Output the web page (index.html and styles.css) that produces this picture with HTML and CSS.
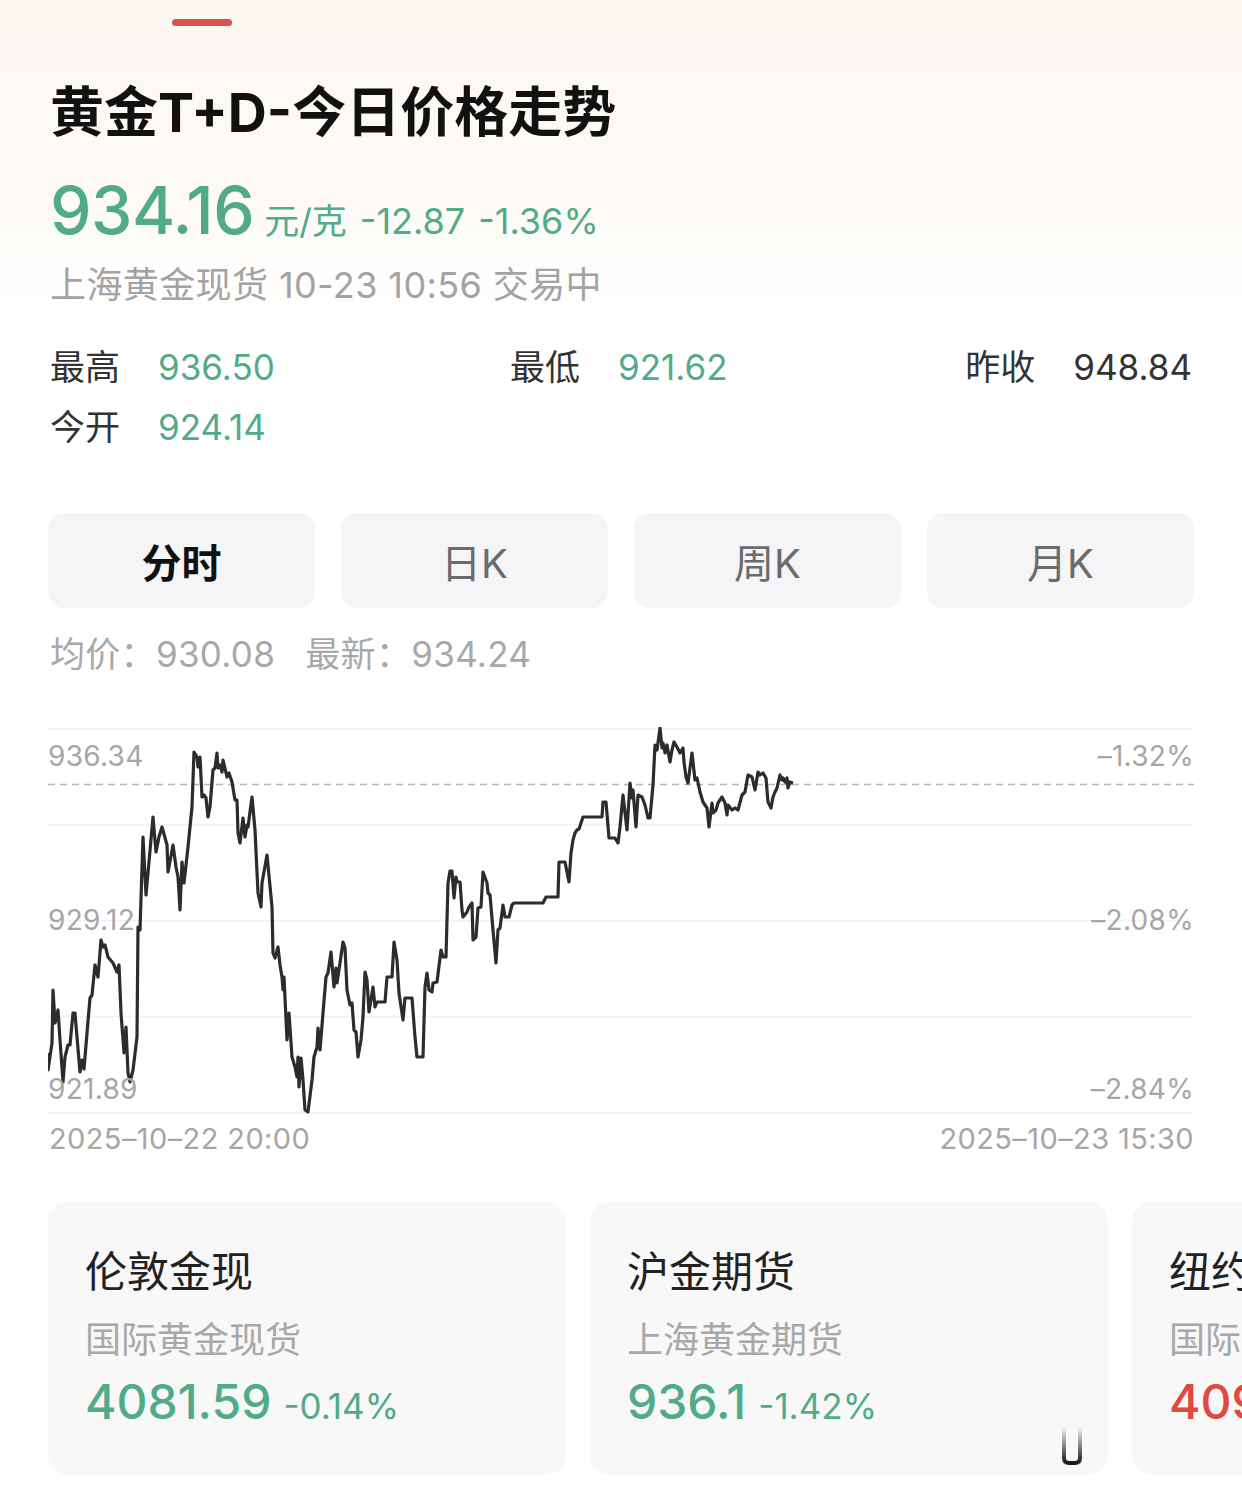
FILE: index.html
```html
<!DOCTYPE html>
<html lang="zh-CN">
<head>
  <meta charset="UTF-8">
  <title>黄金T+D-今日价格走势</title>
  <link rel="stylesheet" href="styles.css">
</head>
<body>

<div class="page">
  <!-- header: name, price, status -->
  <header class="hero">
    <div class="tab-mark"></div>
    <h1 class="title">黄金T+D-今日价格走势</h1>
    <div class="price-line">
      <span class="price">934.16</span>
      <span class="unit">元/克</span>
      <span class="chg">-12.87</span>
      <span class="chg">-1.36%</span>
    </div>
    <div class="meta">上海黄金现货 10-23 10:56 交易中</div>
  </header>

  <section class="stats">
    <div class="stat"><span class="stat-label">最高</span><span class="stat-val down">936.50</span></div>
    <div class="stat"><span class="stat-label">最低</span><span class="stat-val down">921.62</span></div>
    <div class="stat stat-end"><span class="stat-label">昨收</span><span class="stat-val">948.84</span></div>
    <div class="stat"><span class="stat-label">今开</span><span class="stat-val down">924.14</span></div>
  </section>

  <nav class="periods">
    <button class="period active">分时</button>
    <button class="period">日K</button>
    <button class="period">周K</button>
    <button class="period">月K</button>
  </nav>

  <div class="avg-line">
    <span>均价：</span><span class="num">930.08</span>
    <span class="gap">最新：</span><span class="num">934.24</span>
  </div>

  <!-- intraday chart -->
  <div class="chart">
    <svg class="chart-svg" viewBox="48 727 1146 387" width="1146" height="387">
      <g class="grid">
        <line x1="48" y1="728.5" x2="1194" y2="728.5"/>
        <line x1="48" y1="824.5" x2="1194" y2="824.5"/>
        <line x1="48" y1="920.5" x2="1194" y2="920.5"/>
        <line x1="48" y1="1016.5" x2="1194" y2="1016.5"/>
        <line x1="48" y1="1112.5" x2="1194" y2="1112.5"/>
      </g>
      <line class="base" x1="48" y1="784.5" x2="1194" y2="784.5"/>
      <polyline class="price-path" points="48,1053 48,1070 52,1043 53,990 55,1023 58,1010 60,1040 63,1082 65,1057 68,1045 70,1045 73,1013 75,1013 77,1037 80,1072 82,1060 84,1069 87,1033 90,998 92,995 95,965 98,977 101,940 103,947 105,945 108,957 113,963 117,972 119,965 121,1013 124,1053 126,1027 128,1073 130,1082 133,1070 137,1037 138,927 140,930 143,837 146,895 148,873 153,817 156,852 159,837 162,827 167,845 168,872 173,845 176,867 178,877 180,910 182,862 184,883 188,847 192,807 194,752 197,757 198,767 200,757 202,797 204,795 206,798 208,817 210,807 213,770 215,768 217,753 218,768 220,765 222,772 223,760 227,777 229,773 232,782 235,800 237,800 238,833 240,843 243,818 245,837 247,825 248,827 252,797 255,830 258,893 261,907 262,883 267,855 272,907 273,953 275,958 278,947 280,965 282,977 283,990 284,977 287,1040 289,1013 292,1057 295,1067 297,1077 298,1057 299,1087 301,1058 303,1080 305,1110 308,1112 312,1080 314,1057 317,1047 318,1028 320,1050 323,1013 326,977 328,973 331,952 334,987 336,968 337,983 340,963 343,942 345,948 347,990 350,1005 352,1003 354,1030 356,1032 358,1057 361,1040 363,1017 365,972 367,980 369,1012 373,987 375,1007 377,1002 385,1002 387,977 392,977 394,942 397,960 399,993 403,1020 405,998 412,998 415,1037 417,1057 423,1057 425,987 427,973 429,990 432,992 433,983 437,982 441,950 443,957 446,957 447,920 448,883 450,871 452,871 454,898 456,877 457,882 460,882 462,910 463,917 467,912 469,907 472,903 473,940 476,937 478,908 481,907 483,872 487,883 488,893 490,895 493,930 496,963 498,930 500,928 503,905 505,917 509,917 512,905 514,903 543,903 546,897 558,897 559,862 565,862 569,882 571,853 573,840 575,833 577,830 579,829 583,817 602,817 603,802 606,802 609,838 615,838 618,843 620,827 623,795 627,830 630,783 632,798 633,790 636,827 638,795 642,797 645,805 648,818 650,818 653,785 655,745 657,750 660,728 662,748 663,743 665,753 667,745 670,762 672,750 674,742 677,747 680,753 683,748 684,762 686,777 688,783 692,753 695,780 697,778 700,792 703,802 707,808 709,827 712,803 713,813 716,810 718,803 722,797 725,803 727,815 728,805 732,810 735,808 738,810 742,795 745,792 748,775 752,777 755,790 758,772 760,775 763,773 766,778 768,802 771,808 773,797 775,792 777,788 780,775 782,780 783,778 785,782 787,778 788,788 790,782 793,783"/>
    </svg>
    <span class="axis axis-l axis-top">936.34</span>
    <span class="axis axis-l axis-mid">929.12</span>
    <span class="axis axis-l axis-low">921.89</span>
    <span class="axis axis-r axis-top">–1.32%</span>
    <span class="axis axis-r axis-mid">–2.08%</span>
    <span class="axis axis-r axis-low">–2.84%</span>
  </div>
  <div class="time-axis">
    <span>2025–10–22 20:00</span>
    <span>2025–10–23 15:30</span>
  </div>

  <!-- related markets -->
  <div class="markets">
    <div class="market">
      <div class="market-name">伦敦金现</div>
      <div class="market-sub">国际黄金现货</div>
      <div class="market-quote down"><span class="market-price">4081.59</span><span class="market-chg">-0.14%</span></div>
    </div>
    <div class="market">
      <div class="market-name">沪金期货</div>
      <div class="market-sub">上海黄金期货</div>
      <div class="market-quote down"><span class="market-price">936.1</span><span class="market-chg">-1.42%</span></div>
    </div>
    <div class="market">
      <div class="market-name">纽约金</div>
      <div class="market-sub">国际黄金期货</div>
      <div class="market-quote up"><span class="market-price">4095.30</span><span class="market-chg">+0.21%</span></div>
    </div>
    <svg class="mark" width="22" height="38" viewBox="0 0 22 38">
      <defs>
        <linearGradient id="markFade" x1="0" y1="0" x2="0" y2="1">
          <stop offset="0" stop-color="#000" stop-opacity="0"/>
          <stop offset="1" stop-color="#000" stop-opacity="0.9"/>
        </linearGradient>
      </defs>
      <path d="M3 0 V31 Q3 36 8 36 H14 Q19 36 19 31 V0" fill="none" stroke="url(#markFade)" stroke-width="4"/>
    </svg>
  </div>
</div>

</body>
</html>
```

FILE: styles.css
```css
* {
  box-sizing: border-box;
}
body {
  margin: 0;
  background: #fff;
  font-family: Inter, "Noto Sans CJK SC", sans-serif;
  color: #222;
}
.page {
  width: 1242px;
  height: 1490px;
  overflow: hidden;
}
.down { color: #52ab88; }
.up { color: #e0493e; }

/* header */
.hero {
  padding: 19px 48px 0 50px;
  height: 320px;
  background: linear-gradient(#fcf7f1 0%, #fdfaf6 60%, #fff 100%);
}
.tab-mark {
  width: 60px;
  height: 7px;
  margin-left: 122px;
  border-radius: 4px;
  background: #d9534c;
}
.title {
  margin: 52px 0 0;
  font-size: 54px;
  line-height: 70px;
  font-weight: 700;
  color: #111;
}
.price-line {
  display: flex;
  align-items: baseline;
  margin-top: 22px;
  height: 80px;
  color: #52ab88;
}
.price {
  font-size: 66px;
  line-height: 80px;
  font-weight: 500;
  letter-spacing: -0.5px;
}
.unit {
  font-size: 35px;
  margin-left: 10px;
}
.chg {
  font-size: 36px;
  margin-left: 13px;
}
.meta {
  margin-top: 13px;
  font-size: 36px;
  line-height: 44px;
  letter-spacing: 0.4px;
  color: #a3a3a3;
}

/* stats */
.stats {
  display: grid;
  grid-template-columns: 460px 452px 1fr;
  row-gap: 16px;
  padding: 25px 50px 0 50px;
}
.stat {
  display: flex;
  align-items: baseline;
  font-size: 35px;
  line-height: 44px;
}
.stat-end {
  justify-self: end;
}
.stat-label {
  color: #333;
  width: 108px;
}
.stat-val {
  color: #333;
}
.stat-val.down {
  color: #52ab88;
}

/* period tabs */
.periods {
  display: flex;
  gap: 26px;
  padding: 0 48px;
  margin-top: 64px;
}
.period {
  flex: 1;
  height: 95px;
  border: 0;
  border-radius: 16px;
  background: #f5f5f7;
  font-family: inherit;
  font-size: 40px;
  color: #6b6b6b;
}
.period.active {
  color: #111;
  font-weight: 700;
}

.avg-line {
  padding: 0 50px;
  margin-top: 24px;
  font-size: 35px;
  line-height: 44px;
  letter-spacing: 0.3px;
  color: #a8a8a8;
}
.avg-line .gap {
  margin-left: 20px;
}

/* chart */
.chart {
  position: relative;
  margin: 51px 48px 0;
  height: 387px;
}
.chart-svg {
  display: block;
}
.grid line {
  stroke: #f1f1f1;
  stroke-width: 1.5;
}
.base {
  stroke: #b5b5b5;
  stroke-width: 1.5;
  stroke-dasharray: 7 5;
}
.price-path {
  fill: none;
  stroke: #2c2c2c;
  stroke-width: 3.2;
  stroke-linejoin: round;
}
.axis {
  position: absolute;
  font-size: 28px;
  line-height: 36px;
  letter-spacing: 0.3px;
  color: #a6a6a6;
}
.axis-l { left: 0; }
.axis-r { right: 0; }
.axis-top { top: 11px; }
.axis-mid { top: 175px; }
.axis-low { top: 344px; }

.time-axis {
  display: flex;
  justify-content: space-between;
  padding: 0 48px 0 49px;
  margin-top: 7px;
  font-size: 29px;
  line-height: 36px;
  letter-spacing: 0.4px;
  color: #a6a6a6;
}

/* market cards */
.markets {
  position: relative;
  display: flex;
  gap: 24px;
  padding-left: 48px;
  margin-top: 45px;
}
.market {
  flex: 0 0 518px;
  height: 273px;
  padding: 42px 37px 0;
  border-radius: 20px;
  background: #f8f8f8;
}
.market-name {
  font-size: 42px;
  line-height: 56px;
  color: #222;
}
.market-sub {
  margin-top: 16px;
  font-size: 36px;
  line-height: 48px;
  color: #a8a8a8;
}
.market-quote {
  display: flex;
  align-items: baseline;
  margin-top: 8px;
}
.market-price {
  font-size: 48px;
  line-height: 60px;
  font-weight: 500;
}
.market-chg {
  margin-left: 12px;
  font-size: 35px;
}
.mark {
  position: absolute;
  left: 1061px;
  top: 225px;
}
```
